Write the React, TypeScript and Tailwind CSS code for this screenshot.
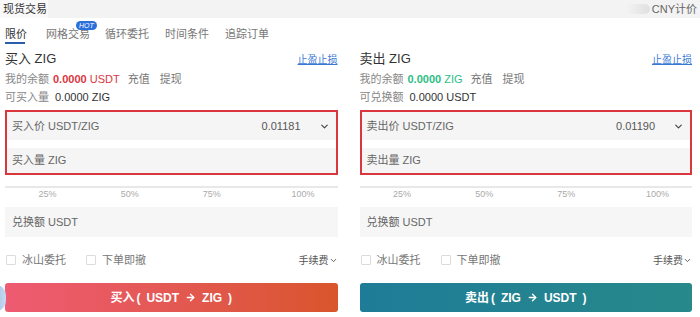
import { ChevronDown, ArrowRight } from 'lucide-react'

const font = { fontFamily: '"Liberation Sans", "Noto Sans CJK SC", sans-serif' }

const tabs = ['限价', '网格交易', '循环委托', '时间条件', '追踪订单']

type PanelProps = {
    side: 'buy' | 'sell'
}

function Panel({ side }: PanelProps) {
    const buy = side === 'buy'
    return (
        <div className="flex flex-col">
            <div className="mt-[2px] h-[24px] flex items-center justify-between">
                <span className="text-[13px] text-[#333]">{buy ? '买入 ZIG' : '卖出 ZIG'}</span>
                <span className="text-[10px] text-[#3a78d6] underline">止盈止损</span>
            </div>
            <div className="h-[17px] flex items-center text-[11px] text-[#888]">
                <span>我的余额</span>
                {buy ? (
                    <span className="ml-[4px] text-[#d9363e]">
                        <b>0.0000</b> USDT
                    </span>
                ) : (
                    <span className="ml-[4px] text-[#2dbd85]">
                        <b>0.0000</b> ZIG
                    </span>
                )}
                <span className="ml-[8px] text-[#777]">充值</span>
                <span className="ml-[10px] text-[#777]">提现</span>
            </div>
            <div className="h-[18px] flex items-center text-[11px] text-[#888]">
                <span>{buy ? '可买入量' : '可兑换额'}</span>
                <span className="ml-[6px] text-[#333]">{buy ? '0.0000 ZIG' : '0.0000 USDT'}</span>
            </div>

            <div className="mt-[4px] border-2 border-[#d9363e] flex flex-col">
                <div className="h-[28px] bg-[#f5f5f5] flex items-center pl-[5px] pr-[6px] text-[11px]">
                    <span className="text-[#666]">{buy ? '买入价 USDT/ZIG' : '卖出价 USDT/ZIG'}</span>
                    <span className="ml-auto text-[#555]">{buy ? '0.01181' : '0.01190'}</span>
                    <ChevronDown size={11} strokeWidth={2.5} className="ml-[18px] text-[#444]" />
                </div>
                <div className="h-[8px] bg-white" />
                <div className="h-[25px] bg-[#f5f5f5] flex items-center pl-[5px] text-[11px] text-[#666]">
                    {buy ? '买入量 ZIG' : '卖出量 ZIG'}
                </div>
            </div>

            <div className="mt-[11px] h-[2px] bg-[#e8e8e8]" />
            <div className="h-[18px] grid grid-cols-4 text-[9px] text-[#aaa]">
                <span className="text-center pl-[2px]">25%</span>
                <span className="text-center">50%</span>
                <span className="text-center pr-[2px]">75%</span>
                <span className="text-center pl-[14px]">100%</span>
            </div>

            <div className="mt-[1px] h-[30px] bg-[#f6f6f6] flex items-center pl-[7px] text-[11px] text-[#666]">
                兑换额 USDT
            </div>

            <div className="h-[46px] flex items-center text-[11px] text-[#777]">
                <span className="w-[10px] h-[10px] border border-[#dcdcdc] rounded-[1px] ml-[1px]" />
                <span className="ml-[6px]">冰山委托</span>
                <span className="w-[10px] h-[10px] border border-[#dcdcdc] rounded-[1px] ml-[20px]" />
                <span className="ml-[6px]">下单即撤</span>
                <span className="ml-auto flex items-center text-[10px] text-[#555]">
                    手续费
                    <ChevronDown size={9} strokeWidth={2.5} />
                </span>
            </div>

            <div
                className={
                    buy
                        ? 'h-[29px] rounded-[3px] flex items-center justify-center text-white text-[12px] font-bold bg-gradient-to-r from-[#ee5b72] to-[#d9552a]'
                        : 'h-[29px] rounded-[3px] flex items-center justify-center text-white text-[12px] font-bold bg-gradient-to-r from-[#1f7c98] to-[#27898a]'
                }
            >
                {buy ? '买入' : '卖出'}
                <span className="ml-[2px]">(</span>
                <span className="ml-[6px] font-semibold">{buy ? 'USDT' : 'ZIG'}</span>
                <ArrowRight size={11} strokeWidth={3} className="mx-[6px]" />
                <span className="font-semibold">{buy ? 'ZIG' : 'USDT'}</span>
                <span className="ml-[6px]">)</span>
            </div>
        </div>
    )
}

export default function App() {
    return (
        <div className="w-[700px] h-[317px] bg-white overflow-hidden relative" style={font}>
            {/* top bar */}
            <div className="h-[18px] bg-[#f3f3f3] flex items-center">
                <div className="h-full w-[48px] bg-[#f9f9f9] flex items-center pl-[3px] text-[11px] text-[#333]">
                    现货交易
                </div>
                <div className="ml-auto flex items-center pr-[3px]">
                    <span className="w-[24px] h-[10px] rounded-full bg-gradient-to-r from-[#f3f3f3] to-[#e0e0e0]" />
                    <span className="ml-[2px] text-[11px] text-[#666]">CNY计价</span>
                </div>
            </div>

            {/* tabs */}
            <div className="h-[27px] flex pl-[5px] pt-[8px] text-[11px] text-[#777]">
                {tabs.map((t, i) => (
                    <div
                        key={t}
                        className={
                            i === 0
                                ? 'relative mr-[19px] text-[#333]'
                                : i === 1
                                  ? 'relative mr-[15px]'
                                  : 'relative mr-[16px]'
                        }
                    >
                        {t}
                        {i === 0 && <span className="absolute left-0 top-[16px] w-[20px] h-[2px] bg-[#2b5ea8]" />}
                        {i === 1 && (
                            <span className="absolute left-[30px] top-[-5px] h-[9px] px-[3px] rounded-full bg-[#2a6fdb] text-white text-[7px] leading-[9px] italic">
                                HOT
                            </span>
                        )}
                    </div>
                ))}
            </div>

            <div className="grid grid-cols-2 gap-[22px] pl-[5px] pr-[8px]">
                <Panel side="buy" />
                <Panel side="sell" />
            </div>

            <span className="absolute left-[-14px] top-[285px] w-[20px] h-[26px] rounded-full bg-gradient-to-r from-[#8cb2e4] to-[#c7d9f0]" />
        </div>
    )
}
